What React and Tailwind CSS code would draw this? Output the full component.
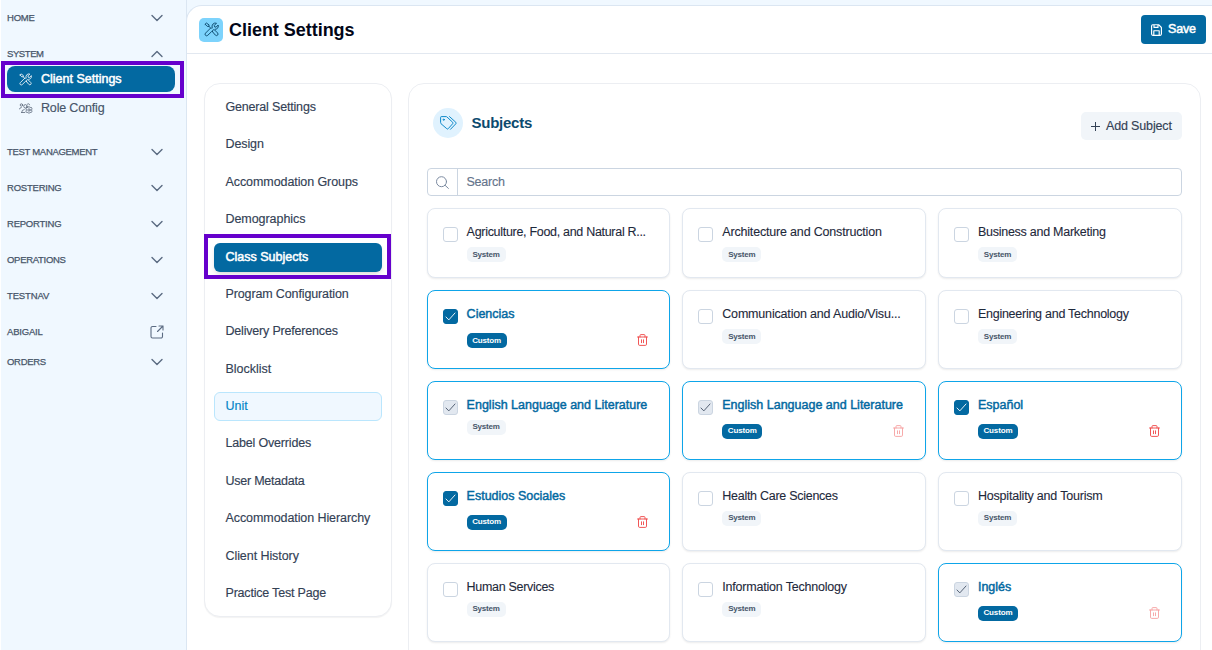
const Chevron = ({ up }) => (
  <svg className="h-3.5 w-3.5 text-[#5b6b82]" viewBox="0 0 14 14" fill="none" stroke="currentColor" strokeWidth="1.4" strokeLinecap="round" strokeLinejoin="round">
    <path d={up ? 'M2 9.500 7 4.500l5 5' : 'M2 4.500l5 5 5-5'} />
  </svg>
);

const External = () => (
  <svg className="h-3.5 w-3.5 text-[#5b6b82]" viewBox="0 0 14 14" fill="none" stroke="currentColor" strokeWidth="1.100" strokeLinecap="round" strokeLinejoin="round">
    <path d="M6 1.500H2.500A1.500 1.500 0 0 0 1 3v8.500A1.500 1.500 0 0 0 2.500 13h8.500a1.500 1.500 0 0 0 1.500-1.500V8M9 1h4v4M13 1 7.500 6.500" />
  </svg>
);

const Tools = ({ className }) => (
  <svg className={className} viewBox="0 0 16 16" fill="none" stroke="currentColor" strokeWidth="1" strokeLinecap="round" strokeLinejoin="round">
    <path d="M1.200 2.400 2.500 1.100l2.800 1.900v1.700l2.300 2.300M5.300 4.700H3.500L1.200 2.400" />
    <path d="M9 10.300q-.3-1.200.5-1.700.7-.6 1.700-.2l3.300 3.300q1 1.200 0 2.300-1.200 1.100-2.400 0L9 10.300z" />
    <path d="M8.700 6.300Q8 3.800 9.500 2.200 11.200.6 13.300 1.300L11 3.600l.3 1.600 1.600.3 2.200-2.300q.7 2.100-.9 3.700-1 .9-2.300.9M7.200 6.300l-5.600 5.600q-1 1.200 0 2.300 1.200 1.100 2.400 0l3.900-3.800" />
  </svg>
);

const UsersGear = () => (
  <svg className="h-[11px] w-[14px]" viewBox="0 0 14 11" fill="none" stroke="currentColor" strokeWidth="0.700" strokeLinecap="round" strokeLinejoin="round">
    <circle cx="2.400" cy="2" r="1.200" />
    <circle cx="6.400" cy="3.300" r="1.700" />
    <path d="M8.300 1.300q.5-.7 1.400-.5.800.2.900 1M.4 6q.2-1.500 1.900-1.500M2.600 9.500Q2.600 6.600 5.200 6.500M2.600 9.500h3.200" />
    <path d="M10 3.700l1.100.7 1.400.1.500 1.300-.5 1.200.5 1.200-.6 1.200-1.300.1-1.100.8-1.200-.8-1.300-.1-.6-1.200.6-1.200-.5-1.200.6-1.300 1.300-.1z" />
    <circle cx="10" cy="7" r="1.200" />
  </svg>
);

const Tags = () => (
  <svg className="h-[14px] w-[17px]" viewBox="0 0 17 14" fill="none" stroke="currentColor" strokeWidth="0.950" strokeLinecap="round" strokeLinejoin="round">
    <path d="M.6 1.200q0-.6.6-.6h4.900q.5 0 .9.4l5.700 5.300q.7.700 0 1.400l-4.500 5q-.7.700-1.400 0L1 7.700q-.4-.4-.4-.9z" />
    <path d="M9.500.6l6.300 5.700q.8.700 0 1.500l-5.300 5.500" />
    <circle cx="3.700" cy="3.700" r="0.600" />
  </svg>
);

const Trash = ({ faded }) => (
  <svg className={`-mt-px h-3 w-[11px] shrink-0 text-[#ef4444] ${faded ? 'opacity-50' : ''}`} viewBox="0 0 11 12" fill="none" stroke="currentColor" strokeWidth="0.900" strokeLinecap="round" strokeLinejoin="round">
    <path d="M.5 3h10M3 3V1.500q0-.9.9-.9h3.200q.9 0 .9.900V3M1.500 3v7.200q0 1.200 1.200 1.200h5.600q1.200 0 1.200-1.200V3M4.500 5.800v2.900M6.500 5.800v2.900" />
  </svg>
);

const SaveIcon = () => (
  <svg className="h-3 w-[11px]" viewBox="0 0 11 12" fill="none" stroke="currentColor" strokeWidth="1.150" strokeLinejoin="round">
    <path d="M.6 1.900Q.6.700 1.800.700h5.800l2.800 2.800v6.600q0 1.200-1.200 1.200H1.800q-1.200 0-1.200-1.200zM3 .8v2.600h4V.8M2.800 11.200V6.700h5.400v4.500" />
  </svg>
);

const GROUPS = [
  ['TEST MANAGEMENT', 'tracking-[-0.300px]'],
  ['ROSTERING', 'tracking-[-0.220px]'],
  ['REPORTING', 'tracking-[-0.220px]'],
  ['OPERATIONS', 'tracking-[-0.300px]'],
  ['TESTNAV', 'tracking-[-0.140px]'],
];

function NavHeading({ label, up, external, track = 'tracking-[-0.200px]' }) {
  return (
    <div className="flex h-4 items-center justify-between pr-[22px] pl-[7px] text-[9.500px] text-[#475569] [-webkit-text-stroke:0.250px_#475569]">
      <span className={track}>{label}</span>
      {external ? <External /> : <Chevron up={up} />}
    </div>
  );
}

function Sidebar() {
  return (
    <aside className="flex w-[187px] shrink-0 flex-col border-r border-l border-r-[#dbe6f2] border-l-white bg-[#f0f8ff] pt-2.5">
      <div className="-ml-px flex flex-col">
        <NavHeading label="HOME" />
        <div className="h-5" />
        <NavHeading label="SYSTEM" up track="tracking-[-0.420px]" />
        <div className="relative mt-1 ml-[7px] flex h-[26px] w-[168px] items-center rounded-lg bg-[#0369a1] pl-3 text-white">
          <Tools className="h-[13px] w-[13px]" />
          <span className="ml-[9px] text-[12.500px] [-webkit-text-stroke:0.500px_white]">Client Settings</span>
          <div className="pointer-events-none absolute -top-[5px] -left-[6px] h-[37px] w-[183px] border-4 border-[#6600cc]" />
        </div>
        <div className="mt-2 flex h-4 items-center pl-[19px] text-[#475569]">
          <UsersGear />
          <span className="ml-2 text-[12.500px] tracking-[-0.170px] [-webkit-text-stroke:0.150px_#475569]">Role Config</span>
        </div>
        <div className="mt-7 flex flex-col gap-5">
          {GROUPS.map(([g, t]) => <NavHeading key={g} label={g} track={t} />)}
          <NavHeading label="ABIGAIL" external />
        </div>
        <div className="mt-3.5"><NavHeading label="ORDERS" track="tracking-[-0.300px]" /></div>
      </div>
    </aside>
  );
}

const MENU = [
  ['General Settings', 'tracking-[-0.180px]'],
  ['Design', 'tracking-[-0.100px]'],
  ['Accommodation Groups', 'tracking-[-0.080px]'],
  ['Demographics', 'tracking-[-0.060px]'],
  ['Class Subjects', ''],
  ['Program Configuration', 'tracking-[-0.130px]'],
  ['Delivery Preferences', 'tracking-[-0.190px]'],
  ['Blocklist', 'tracking-[0px]'],
  ['Unit', 'tracking-[0px]'],
  ['Label Overrides', 'tracking-[-0.180px]'],
  ['User Metadata', 'tracking-[-0.240px]'],
  ['Accommodation Hierarchy', 'tracking-[-0.080px]'],
  ['Client History', 'tracking-[-0.070px]'],
  ['Practice Test Page', 'tracking-[-0.200px]'],
];

function SettingsMenu() {
  return (
    <nav className="flex h-[534px] w-[188px] shrink-0 flex-col gap-2 rounded-2xl border border-[#eceef2] bg-white px-[9px] pt-[8.600px] text-[12.500px] text-[#334155] shadow-[0_1px_1px_rgba(0,0,0,0.050)]">
      {MENU.map(([m, t]) => {
        if (m === 'Class Subjects')
          return (
            <div key={m} className="relative mt-[0.700px] flex h-[28.700px] shrink-0 items-center rounded-md bg-[#0369a1] pl-[11.500px] text-white shadow-md [-webkit-text-stroke:0.500px_white]">
              {m}
              <div className="pointer-events-none absolute -top-[9px] -left-[10px] h-[45px] w-[187px] border-4 border-[#6600cc]" />
            </div>
          );
        if (m === 'Unit')
          return <div key={m} className="flex h-[29.400px] shrink-0 items-center rounded-md border border-[#bae6fd] bg-[#f0f8ff] pl-[10.500px] text-[#0284c7] [-webkit-text-stroke:0.150px_#0284c7]">{m}</div>;
        return <div key={m} className={`flex h-[29.400px] shrink-0 items-center pl-[11.500px] [-webkit-text-stroke:0.150px_#334155] ${t}`}>{m}</div>;
      })}
    </nav>
  );
}

const SUBJECTS = [
  { name: 'Agriculture, Food, and Natural R...', track: 'tracking-[-0.300px]' },
  { name: 'Architecture and Construction', track: 'tracking-[-0.180px]' },
  { name: 'Business and Marketing', track: 'tracking-[-0.260px]' },
  { name: 'Ciencias', state: 'on', custom: true },
  { name: 'Communication and Audio/Visu...', track: 'tracking-[-0.180px]' },
  { name: 'Engineering and Technology', track: 'tracking-[-0.260px]' },
  { name: 'English Language and Literature', state: 'locked' },
  { name: 'English Language and Literature', state: 'locked', custom: true },
  { name: 'Español', state: 'on', custom: true },
  { name: 'Estudios Sociales', state: 'on', custom: true },
  { name: 'Health Care Sciences', track: 'tracking-[-0.270px]' },
  { name: 'Hospitality and Tourism', track: 'tracking-[-0.190px]' },
  { name: 'Human Services', track: 'tracking-[-0.310px]' },
  { name: 'Information Technology', track: 'tracking-[-0.200px]' },
  { name: 'Inglés', state: 'locked', custom: true },
];

const BOX = {
  off: 'border-[#cbd5e1] bg-white',
  on: 'border-[#0369a1] bg-[#0369a1] text-white',
  locked: 'border-[#cbd5e1] bg-[#e2e8f0] text-[#475569]',
};

function SubjectCard({ name, state = 'off', custom, track = '' }) {
  const active = state !== 'off';
  return (
    <div className={`flex rounded-lg border bg-white pl-[15px] shadow-[0_1px_2px_rgba(0,0,0,0.080)] ${active ? 'border-[#0ea5e9]' : 'border-[#e2e8f0]'}`}>
      <div className={`mt-[18px] flex h-[15px] w-[15px] shrink-0 items-center justify-center rounded-[3px] border ${BOX[state]}`}>
        {active && (
          <svg className="h-[11px] w-[11px] shrink-0" viewBox="0 0 11 11" fill="none" stroke="currentColor" strokeWidth="0.900" strokeLinecap="round" strokeLinejoin="round">
            <path d="M1 6l2.800 2.900L10 2" />
          </svg>
        )}
      </div>
      <div className="ml-[9px] min-w-0 flex-1 pt-[15px] pr-[21px]">
        <div className={`h-4 text-[12.500px] leading-4 whitespace-nowrap ${active ? 'text-[#0369a1] [-webkit-text-stroke:0.450px_#0369a1]' : 'text-[#1e293b] [-webkit-text-stroke:0.100px_#1e293b]'} ${track}`}>{name}</div>
        {custom ? (
          <div className="mt-[11px] flex items-center justify-between">
            <span className="flex h-[15px] w-10 items-center justify-center rounded-[5px] bg-[#0369a1] text-[8px] font-bold tracking-[-0.150px] text-white">Custom</span>
            <Trash faded={state === 'locked'} />
          </div>
        ) : (
          <span className="mt-[7px] flex h-[15px] w-[39px] items-center justify-center rounded-[5px] bg-[#f1f5f9] text-[8px] font-bold tracking-[-0.200px] text-[#475569]">System</span>
        )}
      </div>
    </div>
  );
}

function Subjects() {
  return (
    <section className="flex h-[640px] w-[793px] shrink-0 flex-col rounded-2xl border border-[#eceef2] bg-white px-[18px]">
      <div className="flex h-[84px] shrink-0 items-start justify-between pt-6">
        <div className="flex items-center pl-1.5">
          <div className="flex h-[30px] w-[30px] items-center justify-center rounded-full bg-[#e0f2fe] text-[#0284c7]">
            <Tags />
          </div>
          <h2 className="ml-[8.500px] text-[15px] font-bold tracking-[-0.250px] text-[#0c4a6e]">Subjects</h2>
        </div>
        <button className="mt-1 flex h-7 w-[101px] items-center rounded-[5px] bg-[#f1f5f9] pl-[9px] text-[12.500px] whitespace-nowrap text-[#334155]">
          <svg className="h-[11px] w-[11px] shrink-0" viewBox="0 0 11 11" stroke="currentColor" strokeWidth="1"><path d="M5.500 1v9M1 5.500h9" /></svg>
          <span className="ml-[5px] tracking-[-0.150px] [-webkit-text-stroke:0.150px_#334155]">Add Subject</span>
        </button>
      </div>
      <div className="flex h-7 shrink-0 rounded-[4px] border border-[#cbd5e1] text-[12.500px] text-[#64748b]">
        <div className="flex w-[30px] items-center justify-center border-r border-[#cbd5e1]">
          <svg className="mr-px h-[13px] w-[13px]" viewBox="0 0 13 13" fill="none" stroke="#7b8aa0" strokeWidth="1" strokeLinecap="round"><circle cx="5.500" cy="5.700" r="5" /><path d="M9.200 9.400l3.200 3" /></svg>
        </div>
        <div className="flex items-center pl-[8.500px] tracking-[-0.250px] [-webkit-text-stroke:0.150px_#64748b]">Search</div>
      </div>
      <div className="mt-3 -ml-[0.400px] mr-[0.400px] grid auto-rows-[78.900px] grid-cols-3 grid-rows-[70px] gap-3">
        {SUBJECTS.map((s, i) => <SubjectCard key={i} {...s} />)}
      </div>
    </section>
  );
}

export default function App() {
  return (
    <div className="flex h-[650px] w-[1212px] overflow-hidden bg-[#f0f8ff] font-['Liberation_Sans',Arial,sans-serif]">
      <Sidebar />
      <main className="mt-[5px] -ml-px flex min-w-0 flex-1 flex-col overflow-hidden rounded-tl-2xl border-t border-l border-[#dbe6f2] bg-white">
        <header className="flex h-12 shrink-0 items-center justify-between border-b border-[#e2e8f0] pr-1.5 pl-3">
          <div className="flex items-center">
            <div className="flex h-6 w-6 items-center justify-center rounded-[5px] bg-[#7dd3fc] text-[#0c4a6e]">
              <Tools className="h-[15px] w-[15px]" />
            </div>
            <h1 className="ml-1.5 pt-px text-[18px] font-bold tracking-[-0.030px] text-[#020617]">Client Settings</h1>
          </div>
          <button className="flex h-[29px] w-[65px] items-center rounded-[4px] bg-[#0369a1] pl-2.5 text-[12.500px] text-white">
            <SaveIcon />
            <span className="ml-1.5 tracking-[-0.150px] [-webkit-text-stroke:0.500px_white]">Save</span>
          </button>
        </header>
        <div className="flex min-h-0 flex-1 gap-4 pt-[29px] pl-[17px]">
          <SettingsMenu />
          <Subjects />
        </div>
      </main>
    </div>
  );
}
